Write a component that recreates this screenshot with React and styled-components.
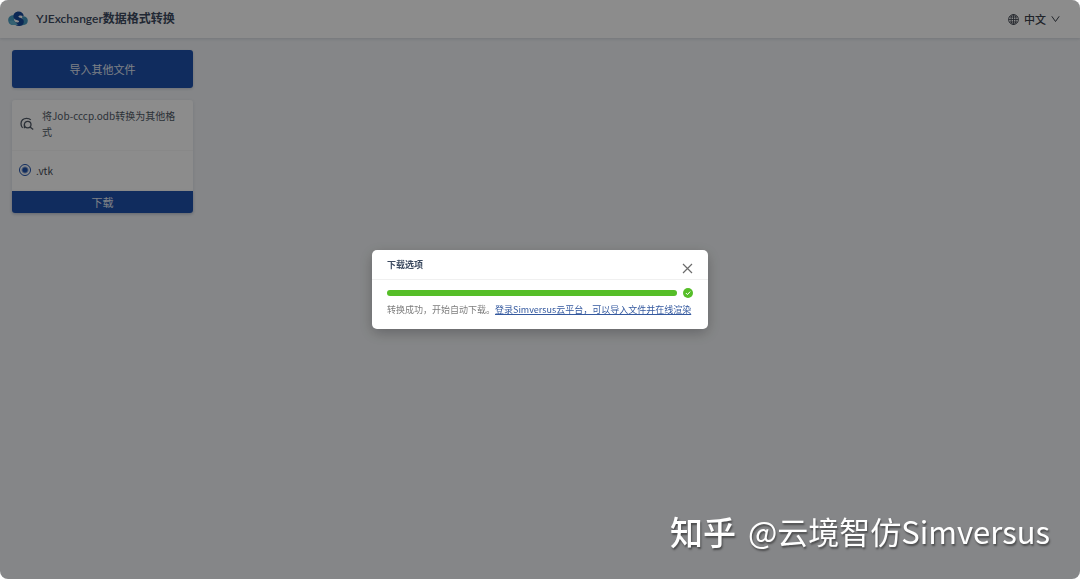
import React, { useState } from "react";
import styled, { createGlobalStyle } from "styled-components";

const GlobalStyle = createGlobalStyle`
  * {
    box-sizing: border-box;
  }
  body {
    margin: 0;
    background: #fff;
    color: #3c4a60;
    font-family: "Noto Sans CJK SC", "Noto Sans", sans-serif;
    font-size: 10px;
  }
  button {
    font-family: inherit;
    cursor: pointer;
  }
`;

const Page = styled.div`
  position: relative;
  min-height: 100vh;
  border-radius: 8px;
  overflow: hidden;
  background: #f3f5f8;
`;

const Header = styled.header`
  display: flex;
  align-items: center;
  justify-content: space-between;
  height: 38px;
  padding: 0 20px 0 8px;
  background: #fff;
  box-shadow: 0 1px 3px rgba(30, 50, 90, 0.16);
`;

const Brand = styled.div`
  display: flex;
  align-items: center;
  gap: 8px;
`;

const Title = styled.h1`
  margin: 0;
  font-family: Lato, "Noto Sans CJK SC", sans-serif;
  font-size: 12px;
  line-height: 20px;
  font-weight: 600;
`;

const Language = styled.button`
  display: flex;
  align-items: center;
  gap: 5px;
  padding: 0;
  border: 0;
  background: none;
  color: #3c424c;
  font-size: 11px;
  font-weight: 500;
  line-height: 16px;
`;

const Sidebar = styled.main`
  display: flex;
  flex-direction: column;
  gap: 12px;
  width: 205px;
  padding: 12px;
`;

const PrimaryButton = styled.button`
  width: 100%;
  height: ${(props) => (props.$large ? "38px" : "22px")};
  padding: 0 0 1px;
  border: 0;
  border-radius: ${(props) => (props.$large ? "3px" : "0 0 3px 3px")};
  background: #1e51ac;
  color: #e4eaf4;
  font-size: 11px;
  line-height: 16px;
  box-shadow: 0 1px 3px rgba(30, 50, 90, 0.2);
`;

const Card = styled.section`
  border-radius: 3px;
  background: #fff;
  box-shadow: 0 1px 4px rgba(30, 50, 90, 0.12);
`;

const CardHeader = styled.div`
  display: flex;
  align-items: center;
  gap: 8px;
  padding: 8px 8px 10px;
  border-bottom: 1px solid #f7f7f8;
`;

const CardTitle = styled.h2`
  flex: 1;
  margin: 0;
  color: #505966;
  font-size: 10px;
  line-height: 16px;
  font-weight: 400;
`;

const Option = styled.label`
  display: flex;
  align-items: center;
  gap: 5px;
  height: 40px;
  padding: 0 7px 2px;
  color: #3f4754;
`;

const Radio = styled.input`
  appearance: none;
  width: 12px;
  height: 12px;
  margin: 0;
  border: 1px solid #1e51ac;
  border-radius: 50%;
  &:checked {
    background: radial-gradient(circle, #1e51ac 0 2px, #fff 4px);
  }
`;

const Mask = styled.div`
  position: fixed;
  inset: 0;
  display: flex;
  align-items: center;
  justify-content: center;
  border-radius: 8px;
  background: rgba(0, 0, 0, 0.45);
`;

const Modal = styled.div`
  width: 336px;
  border-radius: 5px;
  background: #fff;
  box-shadow: 0 4px 14px rgba(0, 0, 0, 0.25);
`;

const ModalHeader = styled.div`
  display: flex;
  justify-content: space-between;
  height: 30px;
  padding: 8px 15px 0;
  border-bottom: 1px solid #f0f0f0;
`;

const ModalTitle = styled.h2`
  margin: 0;
  font-size: 9px;
  line-height: 14px;
  font-weight: 600;
`;

const CloseButton = styled.button`
  display: flex;
  align-items: center;
  justify-content: center;
  width: 12px;
  height: 20px;
  padding: 0;
  border: 0;
  background: none;
  color: #6b6b6b;
`;

const ModalBody = styled.div`
  padding: 7px 15px 12px;
`;

const ProgressRow = styled.div`
  display: flex;
  align-items: center;
  gap: 6px;
  height: 12px;
`;

const Track = styled.div`
  flex: 1;
  height: 6px;
  border-radius: 3px;
  background: #f5f5f5;
`;

const Bar = styled.div`
  height: 100%;
  border-radius: 3px;
  background: #56be28;
`;

const Message = styled.p`
  margin: 3px 0 0;
  color: #7d7d7d;
  font-size: 9px;
  line-height: 15px;
  white-space: nowrap;
`;

const Link = styled.a`
  color: #34599f;
  text-decoration: underline;
`;

const Watermark = styled.div`
  position: absolute;
  right: 30px;
  bottom: 25px;
  display: flex;
  align-items: center;
  gap: 12px;
  color: #fff;
  font-size: 31px;
  line-height: 46px;
  text-shadow: 1px 2px 2px rgba(0, 0, 0, 0.45);
  pointer-events: none;
`;

const WatermarkSite = styled.span`
  font-size: 33px;
  font-weight: 500;
`;

const Logo = () => (
  <svg width="20" height="16" viewBox="0 0 20 16" aria-hidden="true">
    <path d="M6 4.2C2.6 4 .2 6 .2 9c0 3 2 5 5 5h4.6L6.2 9.4z" fill="#4b9fc4" />
    <path d="M14 5.2c3.5-.4 5.8 1.4 5.8 4.3 0 2.8-2 4.7-5 4.7H9.4l5.2-3z" fill="#4497bd" />
    <path
      d="M15.8 5.2C15.4 2.2 13.2.6 10.6.6 7.6.6 5.4 2.8 5.4 5.2c0 2.3 1.5 3.4 4 4.1 1.4.4 1.8.8 1.6 1.5-.4 1.1-2.9.8-4.8-.4-.1 2.9 1.8 4.7 4.6 4.7 2.9 0 5-1.8 5-4.4 0-2.2-1.4-3.3-3.6-4-1.5-.4-2-.8-1.7-1.5.4-1 2.8-1 5.3 0z"
      fill="#174a9b"
    />
    <path d="M1.4 10.2c2.2-1.5 4.7-.8 6.3 1.1L10 14H5.2c-1.9 0-3.4-1.4-3.8-3.8z" fill="#62b1cf" />
  </svg>
);

const GlobeIcon = () => (
  <svg width="11" height="11" viewBox="0 0 12 12" fill="none" stroke="currentColor" strokeWidth=".9">
    <circle cx="6" cy="6" r="5.4" />
    <ellipse cx="6" cy="6" rx="2.6" ry="5.4" />
    <path d="M6 .6v10.8M.6 6h10.8M1.5 3.3h9M1.5 8.7h9" />
  </svg>
);

const ChevronIcon = () => (
  <svg width="9" height="8" viewBox="0 0 9 8" fill="none" stroke="currentColor">
    <path d="M.8 1.3 4.5 6.5 8.2 1.3" />
  </svg>
);

const FileSearchIcon = () => (
  <svg width="14" height="14" viewBox="0 0 14 14" fill="none" stroke="#505966" strokeWidth="1.3">
    <path d="M2.6 10.9C1.6 9.9 1 8.5 1 6.8 1 3.5 3.3 1.3 6.6 1.3c1.7 0 3.2.5 4.2 1.6" />
    <path d="M4.4 11.2V7.6" />
    <circle cx="7.7" cy="7.6" r="3.3" />
    <path d="m10 9.9 3.2 2.7" />
  </svg>
);

const CloseIcon = () => (
  <svg width="11" height="11" viewBox="0 0 11 11" stroke="currentColor" strokeWidth="1.2">
    <path d="m1 1 9 9M10 1l-9 9" />
  </svg>
);

const SuccessIcon = () => (
  <svg width="10" height="10" viewBox="0 0 10 10" aria-hidden="true">
    <circle cx="5" cy="5" r="5" fill="#56be28" />
    <path d="m2.9 5 1.5 1.6 2.8-3" fill="none" stroke="#fff" strokeWidth="1" />
  </svg>
);

export default function App() {
  const [open, setOpen] = useState(true);
  const percent = 100;

  return (
    <>
      <GlobalStyle />
      <Page>
        <Header>
          <Brand>
            <Logo />
            <Title>YJExchanger数据格式转换</Title>
          </Brand>
          <Language type="button">
            <GlobeIcon />
            中文
            <ChevronIcon />
          </Language>
        </Header>
        <Sidebar>
          <PrimaryButton type="button" $large>
            导入其他文件
          </PrimaryButton>
          <Card>
            <CardHeader>
              <FileSearchIcon />
              <CardTitle>将Job-cccp.odb转换为其他格式</CardTitle>
            </CardHeader>
            <Option>
              <Radio type="radio" name="format" value="vtk" defaultChecked />
              .vtk
            </Option>
            <PrimaryButton type="button">下载</PrimaryButton>
          </Card>
        </Sidebar>
        {open && (
          <Mask>
            <Modal role="dialog" aria-modal="true" aria-labelledby="download-title">
              <ModalHeader>
                <ModalTitle id="download-title">下载选项</ModalTitle>
                <CloseButton type="button" aria-label="关闭" onClick={() => setOpen(false)}>
                  <CloseIcon />
                </CloseButton>
              </ModalHeader>
              <ModalBody>
                <ProgressRow>
                  <Track role="progressbar" aria-label="下载选项" aria-valuenow={percent}>
                    <Bar style={{ width: `${percent}%` }} />
                  </Track>
                  <SuccessIcon />
                </ProgressRow>
                <Message>
                  转换成功，开始自动下载。
                  <Link href="#simversus">登录Simversus云平台，可以导入文件并在线渲染</Link>
                </Message>
              </ModalBody>
            </Modal>
          </Mask>
        )}
        <Watermark>
          <WatermarkSite>知乎</WatermarkSite>
          <span>@云境智仿Simversus</span>
        </Watermark>
      </Page>
    </>
  );
}
